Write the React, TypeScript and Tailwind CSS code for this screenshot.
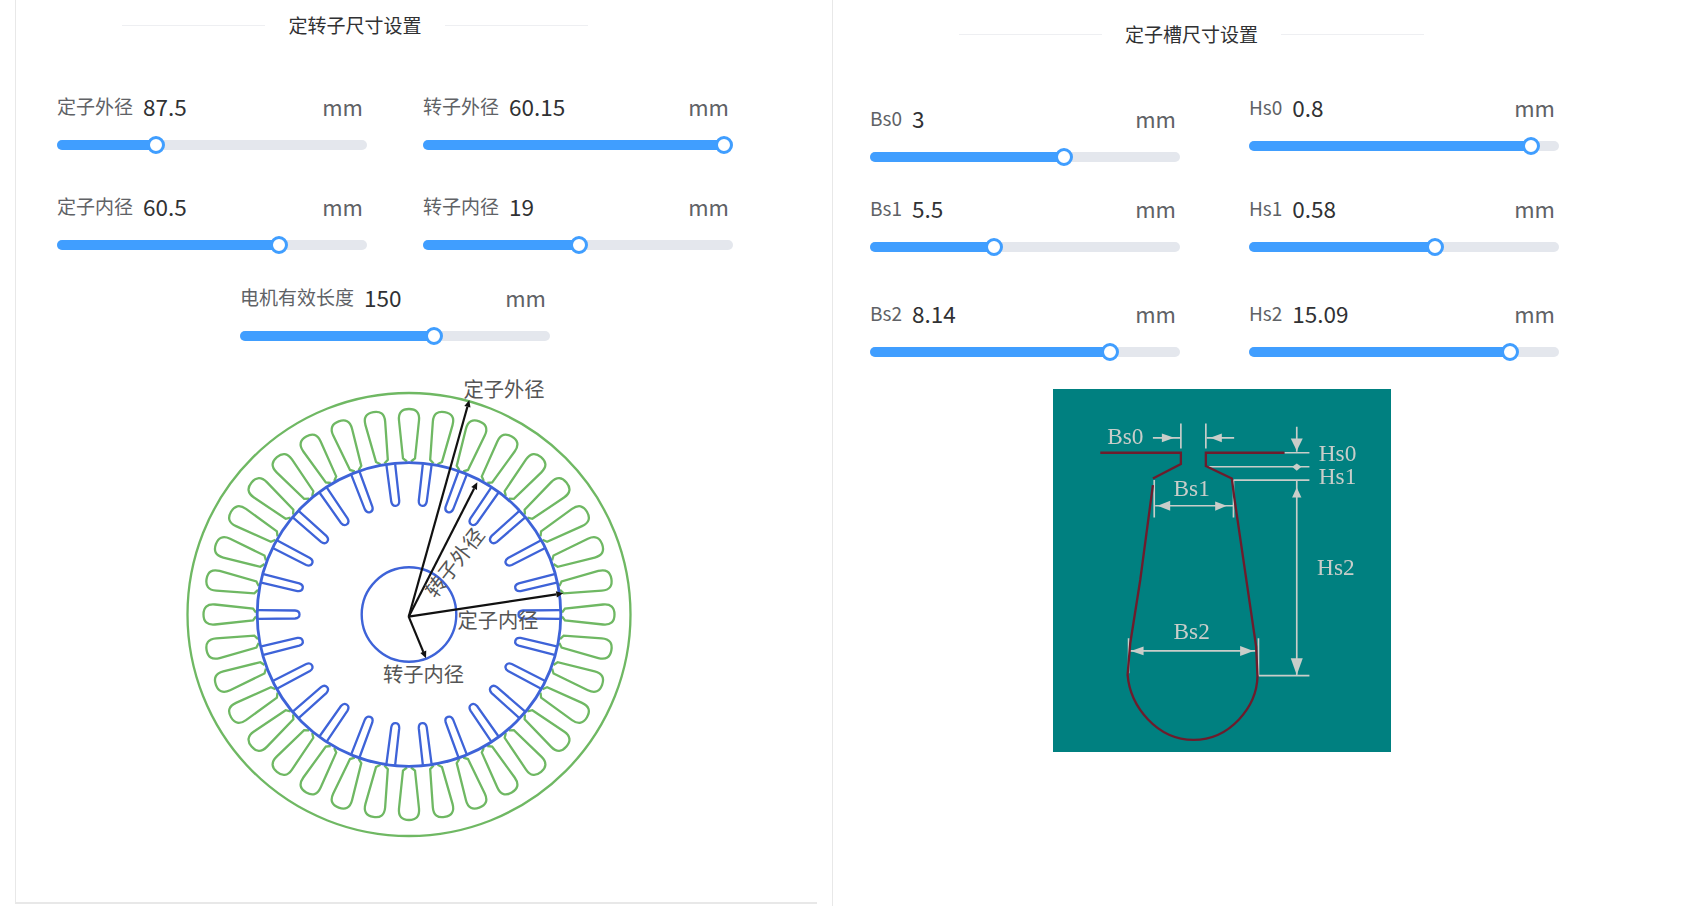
const rotorAngles = Array.from({ length: 26 }, (_, i) => (i * 360) / 26);
const statorAngles = Array.from({ length: 36 }, (_, i) => i * 10);

function Slider({ label, value, thumb, className = "" }: { label: string; value: string; thumb: number; className?: string }) {
  return (
    <div className={`w-[310px] ${className}`}>
      <div className="flex h-[27px] items-center justify-between pr-[4px]">
        <div className="flex items-center gap-[10px]">
          <span className="text-[19px] text-[#606266]">{label}</span>
          <span className="text-[22.5px] text-[#303133]">{value}</span>
        </div>
        <span className="text-[22px] text-[#606266]">mm</span>
      </div>
      <div className="relative mt-[16px] flex h-[18px] items-center">
        <div className="h-[10px] w-full rounded-full bg-[#e4e7ed]" />
        <div className="absolute left-0 h-[10px] rounded-full bg-[#409eff]" style={{ width: thumb }} />
        <div
          className="absolute top-0 h-[18px] w-[18px] -translate-x-1/2 rounded-full border-[3px] border-[#409eff] bg-white"
          style={{ left: thumb }}
        />
      </div>
    </div>
  );
}

function Title({ text, className }: { text: string; className: string }) {
  return (
    <div className={`flex items-center justify-between ${className}`}>
      <div className="h-px w-[143px] bg-[#eeeff2]" />
      <span className="text-[19px] text-[#303133]">{text}</span>
      <div className="h-px w-[143px] bg-[#eeeff2]" />
    </div>
  );
}

function Arrow({ x, y }: { x: number; y: number }) {
  const ox = 408.7;
  const oy = 616.7;
  const d = Math.hypot(x - ox, y - oy);
  const ux = (x - ox) / d;
  const uy = (y - oy) / d;
  const bx = x - ux * 7;
  const by = y - uy * 7;
  return (
    <g>
      <line x1={ox} y1={oy} x2={bx} y2={by} stroke="#111" strokeWidth="2.2" />
      <polygon points={`${x},${y} ${bx - uy * 3.2},${by + ux * 3.2} ${bx + uy * 3.2},${by - ux * 3.2}`} fill="#111" />
    </g>
  );
}

function MotorDiagram() {
  const cx = 409;
  const cy = 614.5;
  return (
    <svg viewBox="170 360 480 490" className="block h-[490px] w-[480px]">
      <g fill="none" strokeWidth="2.3" className="blur-[0.4px]">
        <circle cx={cx} cy={cy} r="221.5" stroke="#6fb863" />
        {statorAngles.map((a) => (
          <path
            key={a}
            transform={`translate(${cx} ${cy}) rotate(${a})`}
            stroke="#6fb863"
            d="M153 -2 L156 -6 L194 -10 C202 -10.8 205.5 -7 205.5 0 C205.5 7 202 10.8 194 10 L156 6 L153 2"
          />
        ))}
        {rotorAngles.map((a) => (
          <path
            key={a}
            transform={`translate(${cx} ${cy}) rotate(${a})`}
            stroke="#3e63d8"
            d="M151 -4.4 L114 -4 Q109.5 -3.6 109.5 0 Q109.5 3.6 114 4 L151 4.4"
          />
        ))}
        <circle cx={cx} cy={cy} r="151.8" stroke="#3e63d8" strokeWidth="2.8" />
        <circle cx={cx} cy={cy} r="47.3" stroke="#3e63d8" strokeWidth="2.4" />
      </g>
      <Arrow x={469.3} y={400} />
      <Arrow x={477.3} y={482.3} />
      <Arrow x={563.3} y={593.3} />
      <Arrow x={426} y={658.3} />
      <g fill="#555" fontSize="20.3">
        <text x="463.5" y="397">定子外径</text>
        <text x="457.5" y="628">定子内径</text>
        <text x="383" y="681.5">转子内径</text>
        <text transform="translate(455 563) rotate(-52)" textAnchor="middle" y="7">转子外径</text>
      </g>
    </svg>
  );
}

function SlotDiagram() {
  const gray = "#c9cdc9";
  const red = "#6d1c2c";
  return (
    <svg viewBox="38 28 1015 1087" className="block h-[363px] w-[338px] bg-[#008080] font-['Liberation_Serif',serif]">
      <g className="blur-[0.3px]">
        <g fill="none" stroke={gray} strokeWidth="5">
          <path d="M422 130V205M497 130V205M338 173H420M500 173H582" />
          <path d="M733 218H808M500 260H808M580 300H808M655 887H808M655 775V887M770 140V215M770 300V885" />
          <path d="M342 300V412M580 300V412M345 377H578M265 775V880M268 813H650" />
        </g>
        <g fill={gray}>
          <polygon points="365,160 402,173 365,186" />
          <polygon points="545,160 510,173 545,186" />
          <polygon points="752,175 788,175 770,212" />
          <polygon points="770,250 784,260 770,272 756,260" />
          <polygon points="770,322 784,352 756,352" />
          <polygon points="752,835 788,835 770,885" />
          <polygon points="390,362 352,377 390,392" />
          <polygon points="525,364 560,377 525,392" />
          <polygon points="310,800 272,813 310,826" />
          <polygon points="600,798 640,813 600,828" />
        </g>
        <g fill="none" stroke={red} strokeWidth="7">
          <path d="M180 218H422V252L338 295" />
          <path d="M338 315L300 600L270 790L262 885C270 980 350 1080 460 1080C570 1080 650 980 652 890L648 800L582 350L575 295L497 258V218H733" />
        </g>
        <g fill={gray} fontSize="70">
          <text x="201" y="191">Bs0</text>
          <text x="836" y="243">Hs0</text>
          <text x="836" y="313">Hs1</text>
          <text x="400" y="348">Bs1</text>
          <text x="831" y="586">Hs2</text>
          <text x="400" y="778">Bs2</text>
        </g>
      </g>
    </svg>
  );
}

export default function App() {
  return (
    <div className="flex h-[906px] w-[1700px] items-start overflow-hidden bg-white pl-[15px] font-['Noto_Sans_CJK_SC','Noto_Sans',sans-serif]">
      <div className="h-[904px] w-[802px] shrink-0 border-b-2 border-l border-[#e8e8e8]">
        <Title text="定转子尺寸设置" className="ml-[106px] h-[50px] w-[466px]" />
        <div className="ml-[41px] mt-[43px] grid w-[676px] grid-cols-[310px_310px] gap-x-[56px] gap-y-[39px]">
          <Slider label="定子外径" value="87.5" thumb={99} />
          <Slider label="转子外径" value="60.15" thumb={301} />
          <Slider label="定子内径" value="60.5" thumb={222} />
          <Slider label="转子内径" value="19" thumb={156} />
        </div>
        <Slider label="电机有效长度" value="150" thumb={194} className="ml-[224px] mt-[30px]" />
        <div className="ml-[154px] mt-[15px]">
          <MotorDiagram />
        </div>
      </div>
      <div className="ml-[15px] h-[906px] flex-1 border-l border-[#e8e8e8]">
        <Title text="定子槽尺寸设置" className="ml-[126px] h-[68px] w-[465px]" />
        <div className="ml-[37px] mt-[26px] flex gap-[69px]">
          <div className="flex flex-col pt-[11px]">
            <Slider label="Bs0" value="3" thumb={194} />
            <Slider label="Bs1" value="5.5" thumb={124} className="mt-[29px]" />
            <Slider label="Bs2" value="8.14" thumb={240} className="mt-[44px]" />
          </div>
          <div className="flex flex-col">
            <Slider label="Hs0" value="0.8" thumb={282} />
            <Slider label="Hs1" value="0.58" thumb={186} className="mt-[40px]" />
            <Slider label="Hs2" value="15.09" thumb={261} className="mt-[44px]" />
          </div>
        </div>
        <div className="ml-[220px] mt-[28px]">
          <SlotDiagram />
        </div>
      </div>
    </div>
  );
}
